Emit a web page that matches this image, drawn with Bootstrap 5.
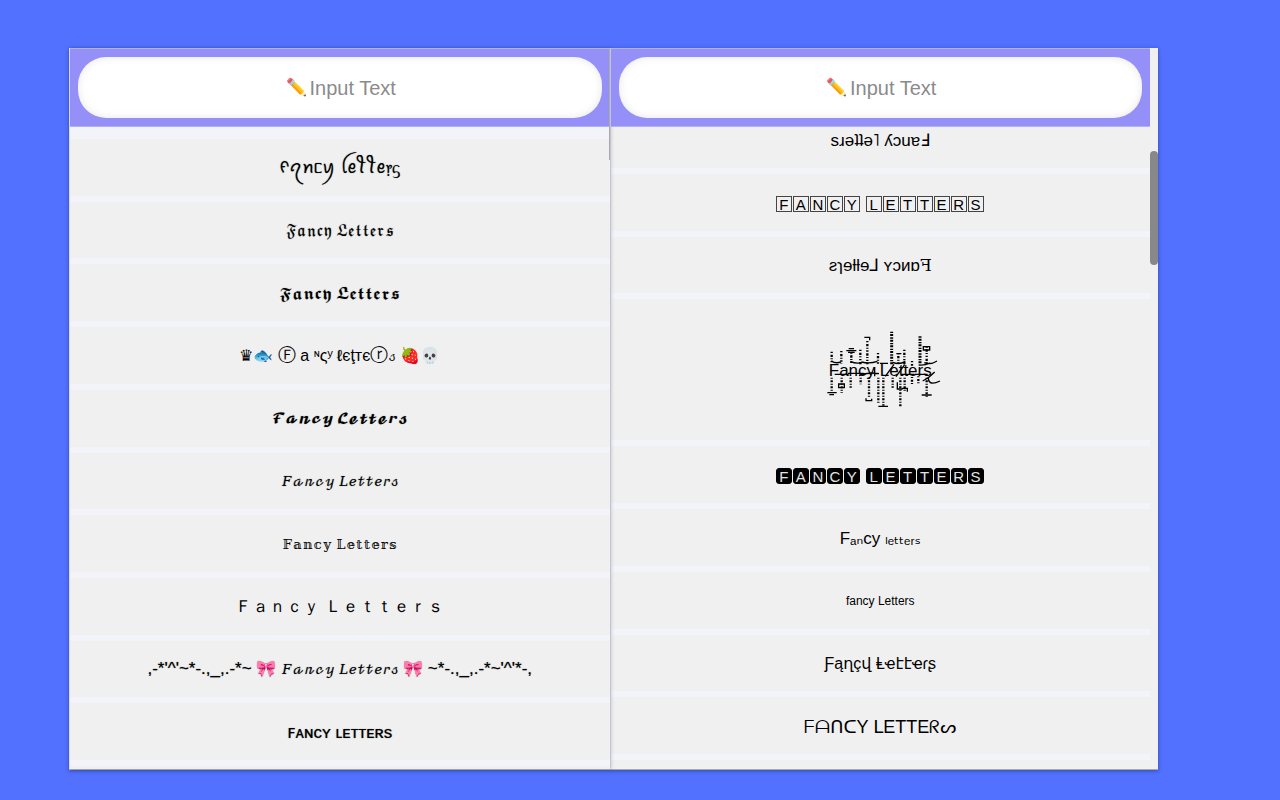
<!DOCTYPE html>
<html lang="en">
<head>
<meta charset="utf-8">
<meta name="viewport" content="width=device-width, initial-scale=1">
<title>Fancy Letters</title>
<link href="https://cdn.jsdelivr.net/npm/bootstrap@5.3.0/dist/css/bootstrap.min.css" rel="stylesheet">
<style>
body{background:#5271ff;color:#000;font:17px/20px "Liberation Sans","DejaVu Math TeX Gyre","DejaVu Sans","Noto Sans",sans-serif}
.stage{padding:48px 122px 30px 69px}
.frame{box-shadow:0 1px 4px rgba(20,25,60,.45);background:#f0f0f0;border-bottom:1px solid #aaa}
.pane{flex:1 1 0;min-width:0;border-left:1px solid #d9d9f2}
.pane-left{box-shadow:2px 0 3px rgba(0,0,0,.12)}
.pane-head{padding:8px;background:#9490f8;border:solid #b3b0fa;border-width:1px 0;position:relative}
.text-in{height:61px;border:0;border-radius:28px;width:100%;text-align:center;padding:2px 8px 0 34px;background:#fff;font-size:20px;box-shadow:inset 0 0 8px rgba(0,0,0,.1);outline-offset:-2px;display:block}
.text-in::placeholder{color:#8b8b8b;opacity:1}
.pencil{position:absolute;left:calc(50% - 54px);top:29px;font-size:17px;pointer-events:none}
.styles{background:#f2f4f9;gap:6px}
.styles-left{padding:12px 0 6px;border-bottom:3px solid #f0f0f0}
.opt{flex:1 1 0;min-height:44px;border:0;border-radius:0;background:#f0f0f0;color:#000;width:100%;padding:2px 0 0;white-space:nowrap;text-align:center}
.opt-cut{flex:0 0 41px;min-height:0;padding-bottom:15px}
.opt-zalgo{flex:0 0 141px}
.opt-end{height:9px;background:#f0f0f0}
.f12{font-size:12px}.f13{font-size:13px}.f14{font-size:14px}.f16{font-size:16px}.f18{font-size:18px}
.inked{text-shadow:0 0 1px rgba(0,0,0,.6)}
.bow{font-size:16px;filter:hue-rotate(-22deg) saturate(.75) brightness(1.25)}
.tile{display:inline-block;width:16px;height:16px;margin-right:1px;line-height:15px;font-size:15px;border:1px solid #444;text-align:center;vertical-align:middle}
.tile-dark{background:#000;border-color:#000;color:#e4e4e4;border-radius:3px}
.serif{font-family:"Liberation Serif","DejaVu Serif",serif}
.marks{position:absolute;left:-3px;top:-32px}
.scroller{width:8px;flex:none;padding-top:103px}
.thumb{height:114px;border-radius:4px;background:#888}
.side-line{position:absolute;right:0;top:0;width:1px;height:112px;background:#aaa;z-index:2}
</style>
</head>
<body>
<main class="stage min-vh-100 d-flex">
<div class="frame d-flex flex-fill">
  <section class="pane pane-left d-flex flex-column position-relative">
    <span class="side-line"></span>
    <div class="pane-head">
      <span class="pencil" aria-hidden="true">✏️</span>
      <input class="text-in" type="text" placeholder="Input Text" aria-label="Input Text">
    </div>
    <div class="styles styles-left d-flex flex-column flex-fill">
      <button class="opt inked">ᠻꪖꪀᥴꪗ ꪶꫀꪻꪻꫀ᥅ᦓ</button>
      <button class="opt f14 inked">𝔉𝔞𝔫𝔠𝔶 𝔏𝔢𝔱𝔱𝔢𝔯𝔰</button>
      <button class="opt f14 inked">𝕱𝖆𝖓𝖈𝖞 𝕷𝖊𝖙𝖙𝖊𝖗𝖘</button>
      <button class="opt f16">♛🐟 <span class="f18">Ⓕ</span> а ᶰςʸ <span class="inked">ℓ</span>єţтє<span class="f18">ⓡ</span><span class="f13">𝓈</span> 🍓💀</button>
      <button class="opt f13 inked">𝓕𝓪𝓷𝓬𝔂 𝓛𝓮𝓽𝓽𝓮𝓻𝓼</button>
      <button class="opt f13 inked">𝐹𝒶𝓃𝒸𝓎 𝐿𝑒𝓉𝓉𝑒𝓇𝓈</button>
      <button class="opt f13">𝔽𝕒𝕟𝕔𝕪 𝕃𝕖𝕥𝕥𝕖𝕣𝕤</button>
      <button class="opt">Ｆａｎｃｙ Ｌｅｔｔｅｒｓ</button>
      <button class="opt inked">,-*'^'~*-.,_,.-*~ <span class="bow">🎀</span> <span class="f13">𝐹𝒶𝓃𝒸𝓎 𝐿𝑒𝓉𝓉𝑒𝓇𝓈</span> <span class="bow">🎀</span> ~*-.,_,.-*~'^'*-,</button>
      <button class="opt inked">ꜰᴀɴᴄʏ ʟᴇᴛᴛᴇʀs</button>
    </div>
  </section>
  <section class="pane d-flex flex-column">
    <div class="pane-head">
      <span class="pencil" aria-hidden="true">✏️</span>
      <input class="text-in" type="text" placeholder="Input Text" aria-label="Input Text">
    </div>
    <div class="styles d-flex flex-column flex-fill">
      <button class="opt opt-cut">sɹǝʇʇǝ˥ ʎɔuɐℲ</button>
      <button class="opt"><span class="tile">F</span><span class="tile">A</span><span class="tile">N</span><span class="tile">C</span><span class="tile">Y</span> <span class="tile">L</span><span class="tile">E</span><span class="tile">T</span><span class="tile">T</span><span class="tile">E</span><span class="tile">R</span><span class="tile">S</span></button>
      <button class="opt">ƨɿɘƚƚɘ⅃ ʏɔᴎɒ<span class="serif">ꟻ</span></button>
      <button class="opt opt-zalgo"><span class="position-relative">Fancy Letters
        <svg class="marks" width="120" height="80" viewBox="84 54 360 240" fill="none" stroke="#000" stroke-width="5" aria-hidden="true">
          <path stroke-width="7" stroke-dasharray="4 5 7 4 3 5" d="M101 122v38M130 120v38M160 124v34M187 116v44M208 90v70M240 126v34M301 126v32M319 116v44M342 150v14M386 106v54"/>
          <path stroke-width="9" stroke-dasharray="4 3 6 4" d="M281 62v98M366 76v84"/>
          <path stroke-width="7" stroke-dasharray="3 5 6 4" d="M101 200v42M131 200v46M158 200v30M188 200v20M213 200v60M241 200v80M256 200v84M284 200v30M307 200v86M320 200v40M342 198v22M361 196v26M386 200v62"/>
          <path stroke-width="4" d="M199 79h16v9M145 119h30M152 113h16M150 124h20M88 245h28M94 251h14M241 286h29M371 252h30M204 262v7h17v-6M246 157h24M298 214v20h16M122 219h17v11h-17zM312 232h16v10M376 107h19v10h-19zM295 128h15M100 149q12 10 29 4M157 151q20 10 40 2M190 153q26 6 48-2M284 154q20 8 38-3M379 155q18 8 38-5M362 162q18 2 34-6M110 190h42M150 187h47M183 194q25-12 60-6M230 168v28M262 196l26-36M294 197l26-36M310 190h40M351 190h38M374 210q18-8 36-27M391 202q2 24 35 8"/>
        </svg></span></button>
      <button class="opt"><span class="tile tile-dark">F</span><span class="tile tile-dark">A</span><span class="tile tile-dark">N</span><span class="tile tile-dark">C</span><span class="tile tile-dark">Y</span> <span class="tile tile-dark">L</span><span class="tile tile-dark">E</span><span class="tile tile-dark">T</span><span class="tile tile-dark">T</span><span class="tile tile-dark">E</span><span class="tile tile-dark">R</span><span class="tile tile-dark">S</span></button>
      <button class="opt">Fₐₙcy ₗₑₜₜₑᵣₛ</button>
      <button class="opt f12">fancy Letters</button>
      <button class="opt f16">Ƒąղçվ Ⱡҽէէҽɾʂ</button>
      <button class="opt f18">ᖴᗩᑎᑕY ᒪETTEᖇᔕ</button>
      <div class="opt-end"></div>
    </div>
  </section>
  <div class="scroller"><div class="thumb"></div></div>
</div>
</main>
<script src="https://cdn.jsdelivr.net/npm/bootstrap@5.3.0/dist/js/bootstrap.bundle.min.js"></script>
</body>
</html>
